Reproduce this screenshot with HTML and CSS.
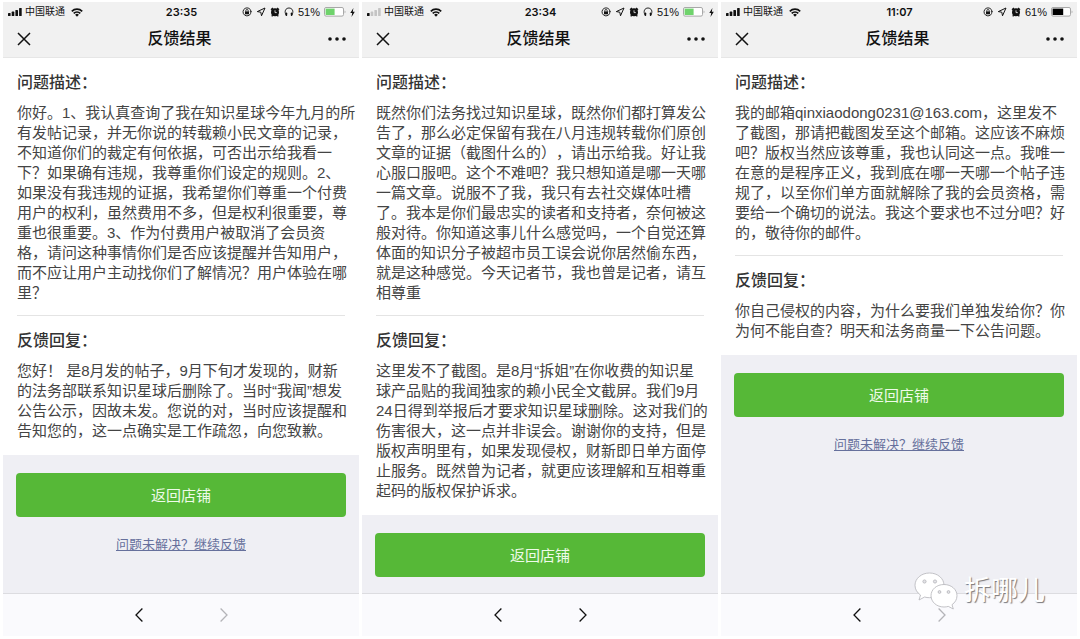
FILE: index.html
```
<!DOCTYPE html>
<html lang="zh-CN">
<head>
  <meta charset="UTF-8" />
  <meta name="viewport" content="width=device-width, initial-scale=1.0" />
  <title>反馈结果</title>
  <link rel="stylesheet" href="styles.css">
</head>
<body>

  <!-- Shared icons -->
  <svg class="sprite" aria-hidden="true">
    <symbol id="signal" viewBox="0 0 14 8">
      <rect x="0" y="5" width="2.6" height="3" rx="0.6"/>
      <rect x="3.7" y="3.6" width="2.6" height="4.4" rx="0.6"/>
      <rect x="7.4" y="2" width="2.6" height="6" rx="0.6"/>
      <rect x="11.1" y="0" width="2.6" height="8" rx="0.6"/>
    </symbol>
    <symbol id="signal-weak" viewBox="0 0 14 8">
      <rect x="0" y="5" width="2.6" height="3" rx="0.6"/>
      <g fill="#c4c4c4">
        <rect x="3.7" y="3.6" width="2.6" height="4.4" rx="0.6"/>
        <rect x="7.4" y="2" width="2.6" height="6" rx="0.6"/>
        <rect x="11.1" y="0" width="2.6" height="8" rx="0.6"/>
      </g>
    </symbol>
    <symbol id="wifi" viewBox="0 0 12 9">
      <path d="M0.8 3.3a7.4 7.4 0 0 1 10.4 0M2.7 5.4a4.7 4.7 0 0 1 6.6 0" fill="none" stroke="currentColor" stroke-width="1.7"/>
      <path d="M4.1 6.8a2.7 2.7 0 0 1 3.8 0L6 8.8z"/>
    </symbol>
    <symbol id="lock" viewBox="0 0 10 10">
      <path d="M8.8 6.2A4 4 0 1 1 9 4.4" fill="none" stroke="currentColor" stroke-width="0.9"/>
      <path d="M7.6 4.2h2.4L8.8 6.2z"/>
      <rect x="3" y="4.4" width="4" height="2.9"/>
      <path d="M3.8 4.6V3.7a1.2 1.2 0 0 1 2.4 0v0.9" fill="none" stroke="currentColor" stroke-width="0.8"/>
    </symbol>
    <symbol id="arrow" viewBox="0 0 10 10">
      <path d="M9 1L1.3 4.6l3.5 0.6 0.7 3.6z" fill="none" stroke="currentColor" stroke-width="1" stroke-linejoin="round"/>
    </symbol>
    <symbol id="alarm" viewBox="0 0 10 10">
      <circle cx="5" cy="5.2" r="4"/>
      <path d="M1 2.7L2.9 1M9 2.7L7.1 1M2.6 8.2L1.8 9.4M7.4 8.2l0.8 1.2" stroke="currentColor" stroke-width="1.3"/>
      <path d="M5 3.3v2.3h1.8" fill="none" stroke="#f1f1f1" stroke-width="0.8"/>
    </symbol>
    <symbol id="headphones" viewBox="0 0 10 10">
      <path d="M2.2 8.2C-0.2 4.2 1.8 1 5 1s5.2 3.2 2.8 7.2" fill="none" stroke="currentColor" stroke-width="0.9"/>
      <rect x="1.6" y="5.6" width="1.6" height="3.4" rx="0.7"/>
      <rect x="6.8" y="5.6" width="1.6" height="3.4" rx="0.7"/>
    </symbol>
    <symbol id="battery-green" viewBox="0 0 22 10">
      <rect x="0.5" y="0.5" width="19" height="8.6" rx="1.5" fill="#fff" stroke="#a8a8a8"/>
      <rect x="1.6" y="1.6" width="9" height="6.4" fill="#6fd36c"/>
      <path d="M20.6 3.4c1.2 0.3 1.2 2.5 0 2.8z" fill="#a8a8a8"/>
    </symbol>
    <symbol id="battery" viewBox="0 0 22 10">
      <rect x="0.5" y="0.5" width="19" height="8.6" rx="1.5" fill="#fff" stroke="#a8a8a8"/>
      <rect x="1.6" y="1.6" width="10.6" height="6.4" fill="#000"/>
      <path d="M20.6 3.4c1.2 0.3 1.2 2.5 0 2.8z" fill="#a8a8a8"/>
    </symbol>
    <symbol id="bolt" viewBox="0 0 5 9">
      <path d="M3.4 0L0.3 5h1.9L1.5 9l3.3-5.3H2.8z"/>
    </symbol>
    <symbol id="close" viewBox="0 0 14 14">
      <path d="M1 1l12 12M13 1L1 13" stroke="currentColor" stroke-width="1.5"/>
    </symbol>
    <symbol id="more" viewBox="0 0 18 4">
      <circle cx="2" cy="2" r="1.8"/><circle cx="9" cy="2" r="1.8"/><circle cx="16" cy="2" r="1.8"/>
    </symbol>
    <symbol id="back" viewBox="0 0 8 14">
      <path d="M7.4 0.5L1 7l6.4 6.5" fill="none" stroke="currentColor" stroke-width="1.3"/>
    </symbol>
    <symbol id="forward" viewBox="0 0 8 14">
      <path d="M0.6 0.5L7 7l-6.4 6.5" fill="none" stroke="currentColor" stroke-width="1.3"/>
    </symbol>
  </svg>

  <section class="phone">
    <header class="top">
      <div class="status">
        <div class="status-left">
          <svg class="i-signal"><use href="#signal"/></svg>
          <span class="carrier">中国联通</span>
          <svg class="i-wifi"><use href="#wifi"/></svg>
        </div>
        <div class="time">23:35</div>
        <div class="status-right">
          <svg class="i-small"><use href="#lock"/></svg>
          <svg class="i-small"><use href="#arrow"/></svg>
          <svg class="i-small"><use href="#alarm"/></svg>
          <svg class="i-small"><use href="#headphones"/></svg>
          <span class="percent">51%</span>
          <svg class="i-battery"><use href="#battery-green"/></svg>
          <svg class="i-bolt"><use href="#bolt"/></svg>
        </div>
      </div>
      <div class="title-bar">
        <button class="icon-btn" aria-label="关闭"><svg class="i-close"><use href="#close"/></svg></button>
        <h1>反馈结果</h1>
        <button class="icon-btn" aria-label="更多"><svg class="i-more"><use href="#more"/></svg></button>
      </div>
    </header>

    <article class="block">
      <h2>问题描述：</h2>
      <p>你好。1、我认真查询了我在知识星球今年九月的所<br>
        有发帖记录，并无你说的转载赖小民文章的记录，<br>
        不知道你们的裁定有何依据，可否出示给我看一<br>
        下？如果确有违规，我尊重你们设定的规则。2、<br>
        如果没有我违规的证据，我希望你们尊重一个付费<br>
        用户的权利，虽然费用不多，但是权利很重要，尊<br>
        重也很重要。3、作为付费用户被取消了会员资<br>
        格，请问这种事情你们是否应该提醒并告知用户，<br>
        而不应让用户主动找你们了解情况？用户体验在哪<br>
        里？</p>
    </article>
    <article class="block reply">
      <h2>反馈回复：</h2>
      <p>您好！ 是8月发的帖子，9月下旬才发现的，财新<br>
        的法务部联系知识星球后删除了。当时“我闻”想发<br>
        公告公示，因故未发。您说的对，当时应该提醒和<br>
        告知您的，这一点确实是工作疏忽，向您致歉。</p>
    </article>

    <div class="actions">
      <button class="shop-btn">返回店铺</button>
      <a class="again" href="#">问题未解决？继续反馈</a>
    </div>

    <nav class="toolbar">
      <button class="icon-btn" aria-label="后退"><svg class="i-chevron"><use href="#back"/></svg></button>
      <button class="icon-btn" aria-label="前进" disabled><svg class="i-chevron"><use href="#forward"/></svg></button>
    </nav>
  </section>

  <section class="phone">
    <header class="top">
      <div class="status">
        <div class="status-left">
          <svg class="i-signal"><use href="#signal-weak"/></svg>
          <span class="carrier">中国联通</span>
          <svg class="i-wifi"><use href="#wifi"/></svg>
        </div>
        <div class="time">23:34</div>
        <div class="status-right">
          <svg class="i-small"><use href="#lock"/></svg>
          <svg class="i-small"><use href="#arrow"/></svg>
          <svg class="i-small"><use href="#alarm"/></svg>
          <svg class="i-small"><use href="#headphones"/></svg>
          <span class="percent">51%</span>
          <svg class="i-battery"><use href="#battery-green"/></svg>
          <svg class="i-bolt"><use href="#bolt"/></svg>
        </div>
      </div>
      <div class="title-bar">
        <button class="icon-btn" aria-label="关闭"><svg class="i-close"><use href="#close"/></svg></button>
        <h1>反馈结果</h1>
        <button class="icon-btn" aria-label="更多"><svg class="i-more"><use href="#more"/></svg></button>
      </div>
    </header>

    <article class="block">
      <h2>问题描述：</h2>
      <p>既然你们法务找过知识星球，既然你们都打算发公<br>
        告了，那么必定保留有我在八月违规转载你们原创<br>
        文章的证据（截图什么的），请出示给我。好让我<br>
        心服口服吧。这个不难吧？我只想知道是哪一天哪<br>
        一篇文章。说服不了我，我只有去社交媒体吐槽<br>
        了。我本是你们最忠实的读者和支持者，奈何被这<br>
        般对待。你知道这事儿什么感觉吗，一个自觉还算<br>
        体面的知识分子被超市员工误会说你居然偷东西，<br>
        就是这种感觉。今天记者节，我也曾是记者，请互<br>
        相尊重</p>
    </article>
    <article class="block reply">
      <h2>反馈回复：</h2>
      <p>这里发不了截图。是8月“拆姐”在你收费的知识星<br>
        球产品贴的我闻独家的赖小民全文截屏。我们9月<br>
        24日得到举报后才要求知识星球删除。这对我们的<br>
        伤害很大，这一点并非误会。谢谢你的支持，但是<br>
        版权声明里有，如果发现侵权，财新即日单方面停<br>
        止服务。既然曾为记者，就更应该理解和互相尊重<br>
        起码的版权保护诉求。</p>
    </article>

    <div class="actions">
      <button class="shop-btn">返回店铺</button>
    </div>

    <nav class="toolbar">
      <button class="icon-btn" aria-label="后退"><svg class="i-chevron"><use href="#back"/></svg></button>
      <button class="icon-btn" aria-label="前进"><svg class="i-chevron"><use href="#forward"/></svg></button>
    </nav>
  </section>

  <section class="phone">
    <header class="top">
      <div class="status">
        <div class="status-left">
          <svg class="i-signal"><use href="#signal"/></svg>
          <span class="carrier">中国联通</span>
          <svg class="i-wifi"><use href="#wifi"/></svg>
        </div>
        <div class="time">11:07</div>
        <div class="status-right">
          <svg class="i-small"><use href="#lock"/></svg>
          <svg class="i-small"><use href="#arrow"/></svg>
          <svg class="i-small"><use href="#alarm"/></svg>
          <span class="percent">61%</span>
          <svg class="i-battery"><use href="#battery"/></svg>
        </div>
      </div>
      <div class="title-bar">
        <button class="icon-btn" aria-label="关闭"><svg class="i-close"><use href="#close"/></svg></button>
        <h1>反馈结果</h1>
        <button class="icon-btn" aria-label="更多"><svg class="i-more"><use href="#more"/></svg></button>
      </div>
    </header>

    <article class="block">
      <h2>问题描述：</h2>
      <p>我的邮箱qinxiaodong0231@163.com，这里发不<br>
        了截图，那请把截图发至这个邮箱。这应该不麻烦<br>
        吧？版权当然应该尊重，我也认同这一点。我唯一<br>
        在意的是程序正义，我到底在哪一天哪一个帖子违<br>
        规了，以至你们单方面就解除了我的会员资格，需<br>
        要给一个确切的说法。我这个要求也不过分吧？好<br>
        的，敬待你的邮件。</p>
    </article>
    <article class="block reply">
      <h2>反馈回复：</h2>
      <p>你自己侵权的内容，为什么要我们单独发给你？你<br>
        为何不能自查？明天和法务商量一下公告问题。</p>
    </article>

    <div class="actions">
      <button class="shop-btn">返回店铺</button>
      <a class="again" href="#">问题未解决？继续反馈</a>
    </div>

    <nav class="toolbar">
      <button class="icon-btn" aria-label="后退"><svg class="i-chevron"><use href="#back"/></svg></button>
      <button class="icon-btn" aria-label="前进" disabled><svg class="i-chevron"><use href="#forward"/></svg></button>
    </nav>

    <!-- Watermark -->
    <div class="watermark">
      <svg class="i-wechat" viewBox="0 0 44 38">
        <g fill="#fff" stroke="#b4b4b9" stroke-width="0.8">
          <path d="M15.500 1C7.500 1 1 6.400 1 13.300c0 4 2.100 7.400 5.500 9.700L5 28l5.600-3c1.600 0.500 3.200 0.700 4.900 0.700C23.500 25.700 30 20.200 30 13.300S23.500 1 15.500 1z"/>
          <path d="M30 12.500c-7.300 0-13 4.900-13 11.200S22.700 35 30 35c1.500 0 3-0.200 4.300-0.600l5 2.600-1.300-4.300c3.100-2.100 5-5.300 5-9 0-6.300-5.700-11.200-13-11.200z"/>
          <circle cx="10.500" cy="9.500" r="1.600" fill="#e4e4e8"/><circle cx="21" cy="9.500" r="1.600" fill="#e4e4e8"/>
          <circle cx="25.500" cy="20" r="1.400" fill="#e4e4e8"/><circle cx="34.500" cy="20" r="1.400" fill="#e4e4e8"/>
        </g>
      </svg>
      <span>拆哪儿</span>
    </div>
  </section>

</body>
</html>
```
FILE: styles.css
```
* {
  box-sizing: border-box;
}

body {
  margin: 0;
  padding: 2px 3px 3px;
  min-height: 100vh;
  display: grid;
  grid-template-columns: repeat(3, 1fr);
  gap: 3px;
  background: #fff;
  color: #444;
  font-family: "Liberation Sans", "Noto Sans CJK SC", sans-serif;
  text-spacing-trim: space-all;
}

svg {
  display: block;
  flex: none;
  fill: currentColor;
}

.sprite {
  position: absolute;
  width: 0;
  height: 0;
}

.phone {
  position: relative;
  display: flex;
  flex-direction: column;
  min-width: 0;
}

/* top bars */
.top {
  background: #f1f1f1;
  border-bottom: 1px solid #e6e6e6;
  color: #111;
}

.status {
  display: grid;
  grid-template-columns: 1fr auto 1fr;
  align-items: center;
  height: 20px;
  padding: 0 4px 0 5px;
  font-size: 11px;
  line-height: 20px;
}

.status-left,
.status-right {
  display: flex;
  align-items: center;
}

.status-left {
  gap: 3px;
}

.status-right {
  justify-content: flex-end;
  gap: 4px;
}

.carrier {
  font-size: 10px;
  margin-right: 3px;
}

.time {
  font-family: Inter, sans-serif;
  font-weight: 600;
}

.i-signal { width: 14px; height: 8px; }
.i-wifi { width: 12px; height: 9px; }
.i-small { width: 10px; height: 10px; }
.i-battery { width: 22px; height: 10px; }
.i-bolt { width: 5px; height: 9px; }
.i-close { width: 14px; height: 14px; }
.i-more { width: 18px; height: 4px; }
.i-chevron { width: 8px; height: 14px; }

.title-bar {
  display: flex;
  align-items: center;
  justify-content: space-between;
  height: 35px;
  padding: 0 13px 2px 14px;
}

.title-bar h1 {
  margin: 0;
  font-size: 16px;
  line-height: 20px;
  font-weight: 500;
}

.icon-btn {
  display: flex;
  padding: 0;
  border: 0;
  background: none;
  color: #111;
  cursor: pointer;
}

.icon-btn:disabled {
  color: #b4b4b8;
}

/* feedback text */
.block {
  padding: 15px 0 12px 14px;
}

.block h2 {
  margin: 0 0 10px;
  font-size: 16px;
  line-height: 20px;
  font-weight: 500;
  color: #333;
}

.block p {
  margin: 0;
  font-size: 15px;
  line-height: 20px;
  white-space: nowrap;
}

.reply {
  position: relative;
  padding: 16px 0 14px 14px;
}

.reply::before {
  content: "";
  position: absolute;
  top: 0;
  left: 14px;
  right: 14px;
  height: 1px;
  background: #e4e4e4;
}

/* buttons */
.actions {
  flex: 1;
  display: flex;
  flex-direction: column;
  align-items: center;
  padding: 18px 13px 16px;
  background: #efeff4;
}

.shop-btn {
  width: 100%;
  height: 44px;
  padding: 0 0 2px;
  border: 0;
  border-radius: 4px;
  background: #56b837;
  color: #eefbe9;
  font-family: inherit;
  font-size: 15px;
  cursor: pointer;
}

.again {
  margin-top: 18px;
  font-size: 13px;
  line-height: 20px;
  color: #66709c;
}

.toolbar {
  display: flex;
  justify-content: center;
  align-items: center;
  gap: 77px;
  height: 43px;
  border-top: 1px solid #dcdce0;
  background: #fafafd;
}

/* watermark */
.watermark {
  position: absolute;
  right: 32px;
  bottom: 25px;
  display: flex;
  align-items: center;
  gap: 6px;
  color: #fff;
  font-size: 27px;
  line-height: 40px;
  text-shadow: 1px 1px 1px #77777c;
}

.i-wechat {
  width: 44px;
  height: 38px;
}
```
